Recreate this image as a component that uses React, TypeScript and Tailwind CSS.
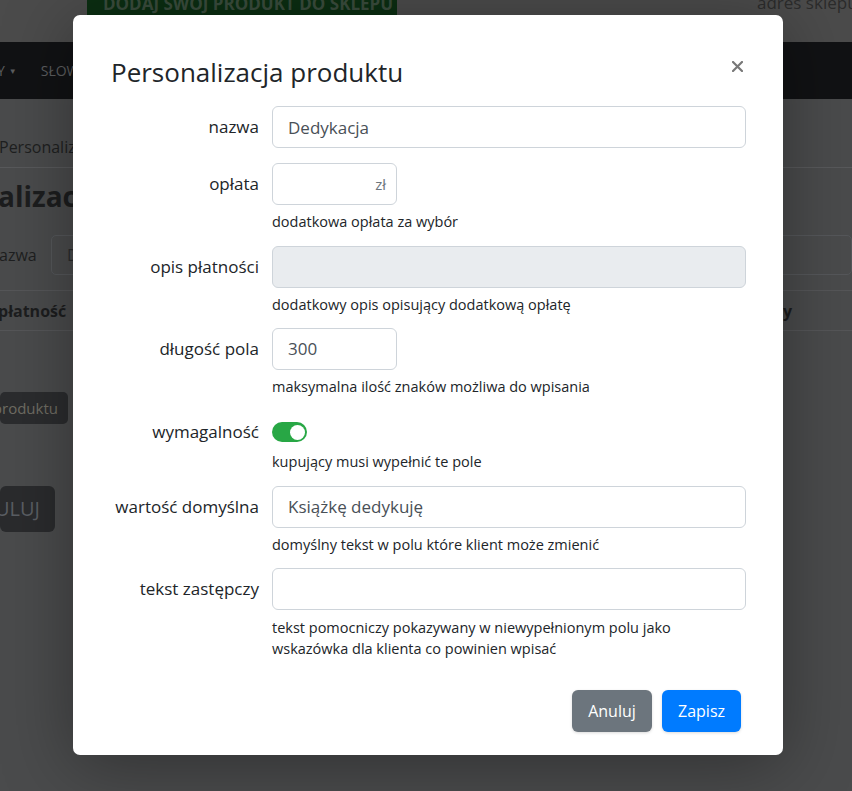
import React from "react";

function Help({ children, className = "" }: { children: React.ReactNode; className?: string }) {
  return <div className={"mt-[6px] text-[14.5px] leading-[21px] text-[#212529] " + className}>{children}</div>;
}

function Label({ children, h = "h-[42px]" }: { children: React.ReactNode; h?: string }) {
  return (
    <div className={"w-[162px] shrink-0 pr-[13px] flex items-center justify-end text-[17px] text-[#212529] " + h}>
      {children}
    </div>
  );
}

const inputCls =
  "h-[42px] w-full rounded-[6px] border border-[#ced4da] bg-white px-[15px] text-[17px] text-[#495057] outline-none";

export default function App() {
  return (
    <div className="relative h-[791px] w-[852px] overflow-hidden bg-[#4a4b4c] font-['Open_Sans','Noto_Sans',sans-serif]">
      {/* background page */}
      <div className="flex h-[42px] bg-[#4b4b4b]">
        <div className="ml-[87px] h-[15px] w-[310px] overflow-hidden bg-[#0b2e12]">
          <div className="-mt-[6px] pl-[16px] text-[17px] font-bold leading-[20px] text-[#3a4c3d]">
            DODAJ SWÓJ PRODUKT DO SKLEPU
          </div>
        </div>
        <div className="ml-auto -mt-[7px] w-[95px] overflow-hidden whitespace-nowrap text-[17px] leading-[20px] text-[#2c2c2c]">
          adres sklepu
        </div>
      </div>
      <div className="flex h-[57px] items-center bg-[#111214] text-[14px] text-[#5c5d5f]">
        <span className="ml-[-3px]">Y</span>
        <span className="ml-[4px] text-[8px]">▼</span>
        <span className="ml-[24px]">SŁOWA</span>
      </div>
      <div className="pt-[36px]">
        <div className="text-[16px] leading-[24px] text-[#1e1f20] -ml-[1px]">Personalizacja produktu</div>
        <div className="mt-[8px] h-px bg-[#58595b]" />
        <div className="mt-[10px] -ml-[2px] text-[28px] font-bold leading-[36px] text-[#1c1d1e]">alizacja produktu</div>
        <div className="mt-[21px] flex items-center">
          <span className="w-[52px] -ml-[1px] text-[16px] text-[#1e1f20]">azwa</span>
          <div className="flex h-[40px] flex-1 items-center rounded-[5px] border border-[#55575a] pl-[15px] text-[16px] text-[#2a2b2c]">
            D
          </div>
        </div>
        <div className="mt-[15px] h-px bg-[#555658]" />
        <div className="flex h-[39px] items-center justify-between text-[16px] font-bold text-[#1c1d1e]">
          <span className="-ml-[2px]">płatność</span>
          <span className="mr-[60px]">y</span>
        </div>
        <div className="h-px bg-[#555658]" />
        <div className="mt-[61px] flex h-[32px] w-[68px] items-center justify-end rounded-[5px] bg-[#2b2c2e] pr-[10px] text-[15px] text-[#6f6c63]">
          produktu
        </div>
        <div className="mt-[62px] flex h-[46px] w-[55px] items-center justify-end rounded-[6px] bg-[#2a2b2d] pr-[15px] text-[20px] text-[#5a5e63]">
          ULUJ
        </div>
      </div>

      {/* modal */}
      <div className="absolute left-[73px] top-[15px] w-[710px] rounded-[7px] bg-white pb-[23px] shadow-[0_10px_70px_rgba(0,0,0,0.35)]">
        <div className="flex items-start justify-between pl-[38px] pr-[40px] pt-[40px]">
          <div className="text-[26px] leading-[34px] text-[#212529]">Personalizacja produktu</div>
          <svg width="11" height="11" viewBox="0 0 11 11" className="mt-[6px]">
            <path d="M1 1L10 10M10 1L1 10" stroke="#787878" strokeWidth="2.2" strokeLinecap="round" />
          </svg>
        </div>

        <div className="mt-[17px] px-[37px]">
          {/* nazwa */}
          <div className="flex">
            <Label>nazwa</Label>
            <div className="flex-1">
              <input className={inputCls} defaultValue="Dedykacja" readOnly />
            </div>
          </div>

          {/* opłata */}
          <div className="mt-[15px] flex">
            <Label>opłata</Label>
            <div className="flex-1">
              <div className="flex h-[42px] w-[125px] items-center justify-end rounded-[6px] border border-[#ced4da] pr-[10px] text-[15px] text-[#6c757d]">
                zł
              </div>
              <Help>dodatkowa opłata za wybór</Help>
            </div>
          </div>

          {/* opis płatności */}
          <div className="mt-[13.5px] flex">
            <Label>opis płatności</Label>
            <div className="flex-1">
              <div className="h-[42px] w-full rounded-[6px] border border-[#ced4da] bg-[#e9ecef]" />
              <Help>dodatkowy opis opisujący dodatkową opłatę</Help>
            </div>
          </div>

          {/* długość pola */}
          <div className="mt-[13.5px] flex">
            <Label>długość pola</Label>
            <div className="flex-1">
              <div className="flex h-[42px] w-[125px] items-center rounded-[6px] border border-[#ced4da] pl-[15px] text-[17px] text-[#495057]">
                300
              </div>
              <Help>maksymalna ilość znaków możliwa do wpisania</Help>
            </div>
          </div>

          {/* wymagalność */}
          <div className="mt-[16px] flex">
            <Label h="h-[38px]">wymagalność</Label>
            <div className="flex-1">
              <div className="flex h-[38px] items-center">
                <div className="flex h-[20px] w-[35px] items-center justify-end rounded-full bg-[#28a745] pr-[2px]">
                  <div className="h-[15px] w-[15px] rounded-full bg-white" />
                </div>
              </div>
              <div className="text-[14.5px] leading-[21px] text-[#212529]">kupujący musi wypełnić te pole</div>
            </div>
          </div>

          {/* wartość domyślna */}
          <div className="mt-[13.5px] flex">
            <Label>wartość domyślna</Label>
            <div className="flex-1">
              <input className={inputCls} defaultValue="Książkę dedykuję" readOnly />
              <Help>domyślny tekst w polu które klient może zmienić</Help>
            </div>
          </div>

          {/* tekst zastępczy */}
          <div className="mt-[13.5px] flex">
            <Label>tekst zastępczy</Label>
            <div className="flex-1">
              <input className={inputCls} defaultValue="" readOnly />
              <Help className="mt-[7px]">
                tekst pomocniczy pokazywany w niewypełnionym polu jako
                <br />
                wskazówka dla klienta co powinien wpisać
              </Help>
            </div>
          </div>
        </div>

        <div className="mt-[31px] flex justify-end gap-[10px] pr-[42px]">
          <button className="h-[42px] w-[80px] rounded-[6px] bg-[#6c757d] text-[16px] text-white shadow-[0_1px_3px_rgba(0,0,0,0.15)]">
            Anuluj
          </button>
          <button className="h-[42px] w-[79px] rounded-[6px] bg-[#007bff] text-[16px] text-white shadow-[0_1px_3px_rgba(0,0,0,0.15)]">
            Zapisz
          </button>
        </div>
      </div>
    </div>
  );
}
